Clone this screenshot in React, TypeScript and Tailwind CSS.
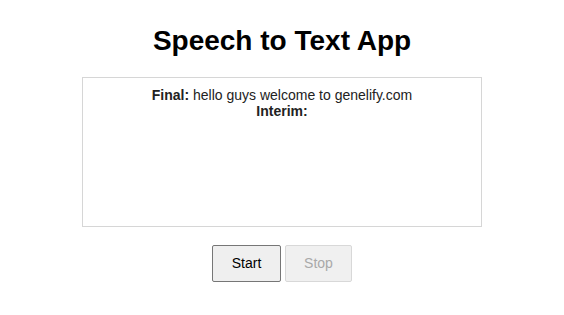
import React from "react";

const App = () => {
  return (
    <div className="flex flex-col items-center w-full font-['Liberation_Sans',Arial,sans-serif] text-black bg-white">
      <h1 className="mt-[25px] text-[28px] leading-[32px] font-bold">Speech to Text App</h1>
      <div className="mt-[20px] w-[400px] h-[150px] border border-[#d6d6d6] pt-[9px] text-center text-[14px] leading-[16px] text-[#222]">
        <div>
          <span className="font-bold">Final:</span> hello guys welcome to genelify.com
        </div>
        <div>
          <span className="font-bold">Interim:</span>
        </div>
      </div>
      <div className="mt-[18px] flex gap-[4px]">
        <button className="w-[69px] h-[37px] text-[14px] bg-[#efefef] border border-[#767676] rounded-[2px] text-black">
          Start
        </button>
        <button
          disabled
          className="w-[67px] h-[37px] text-[14px] bg-[#f0f0f0] border border-[#d8d8d8] rounded-[2px] text-[#a9a9a9]"
        >
          Stop
        </button>
      </div>
    </div>
  );
};

export default App;
